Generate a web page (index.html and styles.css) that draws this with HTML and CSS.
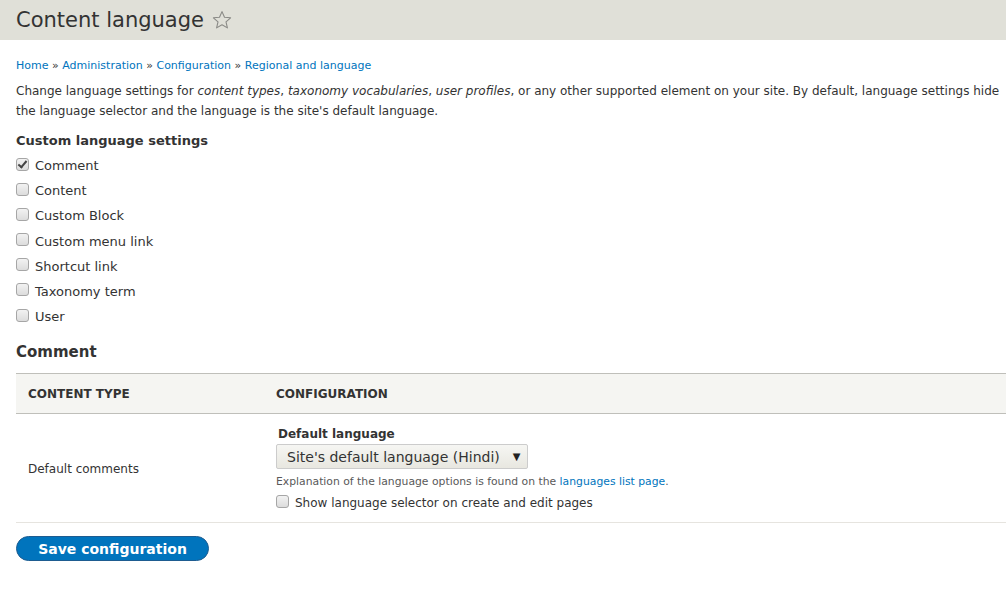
FILE: index.html
```html
<!DOCTYPE html>
<html>
<head>
<meta charset="utf-8">
<link rel="stylesheet" href="styles.css">
</head>
<body>
<header class="page-head">
  <h1 class="title">Content language</h1>
  <svg class="star" width="20" height="20" viewBox="0 0 20 20"><path d="M10 1.6 L12.5 7.3 L18.6 7.8 L14 11.9 L15.4 17.9 L10 14.7 L4.6 17.9 L6 11.9 L1.4 7.8 L7.5 7.3 Z" fill="none" stroke="#8a8a86" stroke-width="1.1" stroke-linejoin="round"/></svg>
</header>
<main class="content">
  <nav class="breadcrumb"><a href="#">Home</a> » <a href="#">Administration</a> » <a href="#">Configuration</a> » <a href="#">Regional and language</a></nav>
  <p class="intro">Change language settings for <em>content types</em>, <em>taxonomy vocabularies</em>, <em>user profiles</em>, or any other supported element on your site. By default, language settings hide the language selector and the language is the site's default language.</p>
  <div class="field-label">Custom language settings</div>
  <ul class="checks">
    <li><label><input type="checkbox" checked> Comment</label></li>
    <li><label><input type="checkbox"> Content</label></li>
    <li><label><input type="checkbox"> Custom Block</label></li>
    <li><label><input type="checkbox"> Custom menu link</label></li>
    <li><label><input type="checkbox"> Shortcut link</label></li>
    <li><label><input type="checkbox"> Taxonomy term</label></li>
    <li><label><input type="checkbox"> User</label></li>
  </ul>
  <h2 class="section">Comment</h2>
  <table class="conf">
    <thead>
      <tr><th class="c1">Content type</th><th>Configuration</th></tr>
    </thead>
    <tbody>
      <tr>
        <td class="c1">Default comments</td>
        <td>
          <div class="sub-label">Default language</div>
          <div class="select"><span>Site's default language (Hindi)</span><span class="arrow">▼</span></div>
          <div class="desc">Explanation of the language options is found on the <a href="#">languages list page</a>.</div>
          <label class="sub-check"><input type="checkbox"> Show language selector on create and edit pages</label>
        </td>
      </tr>
    </tbody>
  </table>
  <button class="save">Save configuration</button>
</main>
</body>
</html>
```
FILE: styles.css
```css
html, body { margin: 0; padding: 0; }
body {
  font-family: "DejaVu Sans", sans-serif;
  font-size: 13px;
  color: #333;
  background: #fff;
  overflow: hidden;
  width: 1006px;
}
a { color: #0074bd; text-decoration: none; }
.page-head {
  background: #e0e0d8;
  height: 40px;
  display: flex;
  align-items: center;
  padding-left: 16px;
}
.title {
  margin: 0;
  font-size: 21px;
  font-weight: normal;
  color: #333;
  line-height: 40px;
}
.star { margin-left: 8px; margin-top: -1px; }
.content { padding: 0 0 0 16px; width: 1100px; }
.breadcrumb { font-size: 11px; line-height: 16px; margin-top: 18px; }
.intro { margin: 7px 0 0 0; font-size: 12px; line-height: 20px; width: 990px; }
.field-label { font-weight: bold; margin-top: 11px; line-height: 18px; }
.checks { list-style: none; margin: 7px 0 0 0; padding: 0; }
.checks li { height: 25.2px; line-height: 18px; }
.checks label, .sub-check { display: flex; align-items: center; }
input[type=checkbox] {
  -webkit-appearance: none;
  appearance: none;
  box-sizing: border-box;
  margin: 0 6px 0 0;
  width: 13px;
  height: 13px;
  border: 1px solid #a6a6a6;
  border-radius: 3px;
  background: linear-gradient(#f2f2f2, #dcdcdc);
  position: relative;
  top: -2px;
  flex: none;
}
input[type=checkbox]:checked::after {
  content: "";
  position: absolute;
  left: 3px;
  top: 0px;
  width: 3px;
  height: 7px;
  border-right: 2px solid #444;
  border-bottom: 2px solid #444;
  transform: rotate(40deg);
}
.section { font-size: 15px; font-weight: bold; margin: 9px 0 0 0; line-height: 20px; }
.conf { border-collapse: collapse; width: 1100px; margin-top: 11px; }
.conf th {
  background: #f5f5f2;
  border-top: 1px solid #bfbfba;
  border-bottom: 1px solid #bfbfba;
  text-transform: uppercase;
  font-size: 12px;
  text-align: left;
  height: 40px;
  box-sizing: border-box;
  padding: 0 12px;
}
.conf th.c1, .conf td.c1 { width: 224px; }
.conf td {
  border-bottom: 1px solid #e6e4df;
  padding: 11px 12px 9px;
  vertical-align: middle;
  font-size: 12px;
}
.sub-label { font-weight: bold; font-size: 12px; line-height: 18px; padding-left: 2px; }
.select {
  display: inline-flex;
  align-items: center;
  box-sizing: border-box;
  height: 25px;
  padding: 0 6px 0 10px;
  border: 1px solid #ccc;
  border-radius: 2px;
  background: linear-gradient(#f6f6f3, #e8e7e0);
  font-size: 14px;
  color: #333;
  margin-top: 1px;
}
.select .arrow { font-size: 10px; margin-left: 13px; color: #222; }
.desc { font-size: 10.8px; color: #595959; line-height: 14px; margin-top: 6px; }
.sub-check { font-size: 12px; line-height: 20px; margin-top: 4px; }
.save {
  margin-top: 13px;
  height: 25px;
  width: 193px;
  border-radius: 13px;
  background: #0074bd;
  border: 1px solid #1e5c90;
  color: #fff;
  font-family: "DejaVu Sans", sans-serif;
  font-weight: bold;
  font-size: 14px;
  padding: 0;
}
```
